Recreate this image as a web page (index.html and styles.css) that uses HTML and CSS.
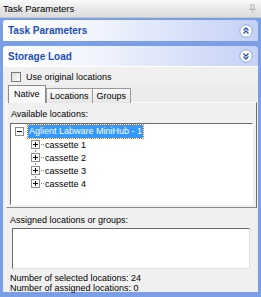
FILE: index.html
```html
<!DOCTYPE html>
<html lang="en">
<head>
    <meta charset="UTF-8">
    <title>Task Parameters</title>
    <link rel="stylesheet" href="styles.css">
</head>
<body>
    <!--Window title-->
    <div class="titlebar">
        <span>Task Parameters</span>
        <svg class="pin" width="7" height="9" viewBox="0 0 7 9">
            <rect x="2" y="0" width="3" height="5" fill="#e8e8e8" stroke="#b8b8b8" stroke-width="1"/>
            <rect x="0" y="5" width="7" height="1" fill="#b8b8b8"/>
            <rect x="3" y="6" width="1" height="3" fill="#b8b8b8"/>
        </svg>
    </div>

    <div class="pane">
        <div class="group-header first">
            <span>Task Parameters</span>
            <svg class="chevron" width="14" height="14" viewBox="0 0 14 14">
                <circle cx="7" cy="7" r="6.2" fill="#fff" stroke="#8ea6dc" stroke-width="1"/>
                <path d="M4.5 6.5 L7 4 L9.5 6.5 M4.5 9.5 L7 7 L9.5 9.5" fill="none" stroke="#2a4fb0" stroke-width="1.3"/>
            </svg>
        </div>
        <div class="group-header">
            <span>Storage Load</span>
            <svg class="chevron" width="14" height="14" viewBox="0 0 14 14">
                <circle cx="7" cy="7" r="6.2" fill="#fff" stroke="#8ea6dc" stroke-width="1"/>
                <path d="M4.5 4.5 L7 7 L9.5 4.5 M4.5 7.5 L7 10 L9.5 7.5" fill="none" stroke="#2a4fb0" stroke-width="1.3"/>
            </svg>
        </div>

        <div class="group-body">
            <label class="check"><span class="box"></span>Use original locations</label>

            <div class="tabs">
                <div class="tab-strip">
                    <span class="tab active">Native</span>
                    <span class="tab">Locations</span>
                    <span class="tab">Groups</span>
                </div>
                <div class="tab-page">
                    <div class="caption">Available locations:</div>
                    <div class="tree">
                        <div class="node root">
                            <span class="knob"><span class="expander minus"></span></span>
                            <span class="text selected">Aglient Labware MiniHub - 1</span>
                        </div>
                        <div class="node child">
                            <span class="knob"><span class="expander"></span></span>
                            <span class="text">cassette 1</span>
                        </div>
                        <div class="node child">
                            <span class="knob"><span class="expander"></span></span>
                            <span class="text">cassette 2</span>
                        </div>
                        <div class="node child">
                            <span class="knob"><span class="expander"></span></span>
                            <span class="text">cassette 3</span>
                        </div>
                        <div class="node child last">
                            <span class="knob"><span class="expander"></span></span>
                            <span class="text">cassette 4</span>
                        </div>
                    </div>
                </div>
            </div>

            <div class="caption outside">Assigned locations or groups:</div>
            <div class="listbox"></div>

            <div class="stats">
                <div>Number of selected locations: 24</div>
                <div>Number of assigned locations: 0</div>
            </div>
        </div>
    </div>
</body>
</html>
```

FILE: styles.css
```css
body { /*blue task pane background*/
    margin: 0;
    width: 261px;
    height: 297px;
    overflow: hidden;
    background-color: #7b9fe6;
    font-family: "Liberation Sans", Arial, sans-serif;
    font-size: 9px;
    color: #000;
}
/*Window caption*/
.titlebar {
    height: 17px;
    display: flex;
    align-items: center;
    justify-content: space-between;
    padding: 0 5px 0 3px;
    background: linear-gradient(to bottom, #fafafa, #e6e6e6 60%, #dcdcdc);
    border-bottom: 1px solid #c8c8c8;
    font-size: 9.5px;
}
.pin {
    display: block;
}
.pane {
    padding: 2px 3px 0 3px;
}
/*Collapsible group headers*/
.group-header {
    height: 20px;
    display: flex;
    align-items: center;
    justify-content: space-between;
    padding: 0 5px 0 5px;
    border-radius: 3px 4px 0 0;
    background: linear-gradient(to right, #ffffff 0%, #f2f5fd 35%, #c4d1f6 100%);
    color: #1e4fb8;
    font-size: 10px;
    font-weight: bold;
}
.group-header.first {
    height: 21px;
    margin-bottom: 5px;
}
.chevron {
    display: block;
}
/*Expanded group contents*/
.group-body {
    height: 226px;
    padding: 4px 1px 0 3px;
    background-color: #f0f0f0;
    border-top: 1px solid #ffffff;
    box-sizing: border-box;
}
.check {
    display: flex;
    align-items: center;
    gap: 5px;
    height: 11px;
    margin-left: 5px;
}
.box {
    width: 8px;
    height: 8px;
    border: 1px solid #7a7a7a;
    background: linear-gradient(135deg, #dcdcdc, #ffffff);
}
/*Tab control*/
.tabs {
    margin-top: 3px;
}
.tab-strip {
    display: flex;
    align-items: flex-end;
    height: 18px;
    padding-left: 4px;
    background-color: #ececec;
}
.tab {
    height: 15px;
    line-height: 14px;
    padding: 0 3.5px;
    border: 1px solid #9a9a9a;
    border-bottom: none;
    margin-right: -1px;
    background: linear-gradient(to bottom, #f8f8f8, #e6e6e6);
    box-sizing: border-box;
}
.tab.active {
    height: 18px;
    line-height: 16px;
    padding: 0 5px;
    margin-left: -2px;
    margin-right: 0;
    background: #f9f9f9;
    border-color: #8a8a8a;
    position: relative;
    z-index: 1;
}
.tab-page {
    height: 106px;
    padding: 5px 3px 0 3px;
    margin-top: -1px;
    border: 1px solid #8a8a8a;
    border-top-color: #ffffff;
    border-left-color: #ffffff;
    border-right-color: #6e6e6e;
    background-color: #f0f0f0;
    box-sizing: border-box;
}
.caption {
    height: 11px;
    line-height: 11px;
    margin: 1px 0 3px 1px;
}
/*Tree view*/
.tree {
    height: 82px;
    padding-top: 1px;
    border: 1px solid;
    border-color: #6b6b6b #ffffff #ffffff #6b6b6b;
    background-color: #fff;
    box-sizing: border-box;
}
.node {
    display: flex;
    align-items: center;
    height: 13px;
}
.knob {
    width: 13px;
    height: 13px;
    display: flex;
    align-items: center;
    justify-content: flex-start;
    flex: none;
}
.root .knob {
    margin-left: 4px;
}
.child .knob {
    margin-left: 20px;
    /*dotted connectors*/
    background-image:
        repeating-linear-gradient(to bottom, #8c8c8c 0 1px, transparent 1px 2px),
        repeating-linear-gradient(to right, #8c8c8c 0 1px, transparent 1px 2px);
    background-size: 1px 13px, 9px 1px;
    background-position: 4px 0, 4px 6px;
    background-repeat: no-repeat;
}
.child.last .knob {
    background-size: 1px 7px, 9px 1px;
}
.expander {
    width: 9px;
    height: 9px;
    border: 1px solid #8c8c8c;
    box-sizing: border-box;
    background-color: #fff;
    background-image:
        linear-gradient(#000, #000),
        linear-gradient(#000, #000);
    background-size: 5px 1px, 1px 5px;
    background-position: 1px 3px, 3px 1px;
    background-repeat: no-repeat;
}
.expander.minus {
    background-size: 5px 1px, 0 0;
}
.text {
    padding: 0 1px;
    line-height: 12px;
}
.text.selected {
    background-color: #3399ff;
    color: #fff;
    outline: 1px dotted #c07a20;
    height: 13px;
}
.caption.outside {
    margin: 7px 0 2px 4px;
}
/*Assigned list box*/
.listbox {
    height: 41px;
    margin: 0 7px 0 6px;
    border: 1px solid;
    border-color: #6b6b6b #e0e0e0 #e0e0e0 #6b6b6b;
    background-color: #fff;
    box-sizing: border-box;
}
.stats {
    margin: 5px 0 0 4px;
    line-height: 9.5px;
}
```
